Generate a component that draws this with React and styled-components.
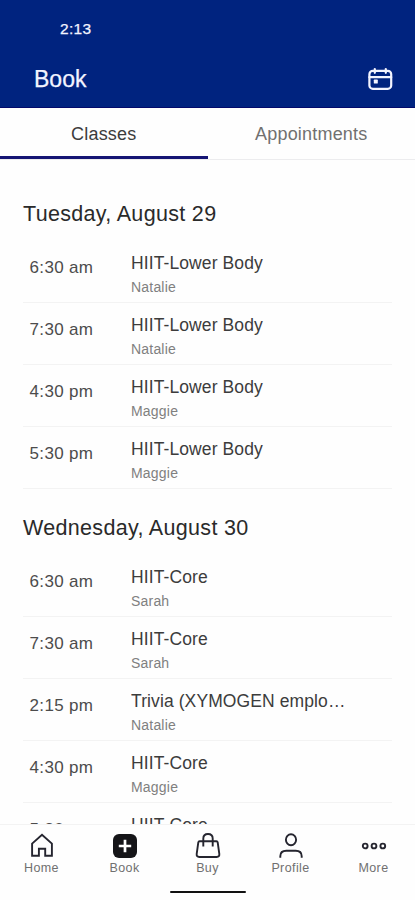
import React from 'react'
import styled, { createGlobalStyle } from 'styled-components'

const GlobalStyle = createGlobalStyle`
    * {
        box-sizing: border-box;
    }

    body {
        margin: 0;
        background: #fefefe;
        font-family: "Liberation Sans", Arial, sans-serif;
    }
`

const Screen = styled.div`
    display: flex;
    flex-direction: column;
    width: 415px;
    height: 900px;
    overflow: hidden;
    background: #fefefe;
`

const Header = styled.header`
    flex: none;
    height: 108px;
    background: #00237f;
    border-bottom: 1px solid #03096b;
    color: #f3f4ff;
`

const StatusBar = styled.div`
    height: 56px;
    padding: 19px 0 0 60px;
    font-size: 15.5px;
    line-height: 19px;
    letter-spacing: .3px;
    -webkit-text-stroke: .25px currentColor;
`

const TitleBar = styled.div`
    display: flex;
    align-items: center;
    justify-content: space-between;
    height: 46px;
    padding: 0 22px 0 34px;

    h1 {
        margin: 0;
        font-size: 23px;
        font-weight: 400;
        line-height: 28px;
        -webkit-text-stroke: .25px currentColor;
    }

    svg {
        display: block;
    }
`

const Tabs = styled.div`
    flex: none;
    display: flex;
    height: 52px;
    border-bottom: 1px solid #ececee;
`

const Tab = styled.div`
    width: 50%;
    height: 51px;
    padding-top: 15px;
    text-align: center;
    font-size: 18px;
    line-height: 22px;
    letter-spacing: .2px;
    color: ${props => props.$active ? '#3c3c3c' : '#707070'};
    border-bottom: 3px solid ${props => props.$active ? '#151574' : 'transparent'};
`

const Schedule = styled.main`
    flex: 1;
    min-height: 0;
    overflow: hidden;
    padding: 29px 23px 0;
`

const Day = styled.section`
    height: 314.4px;

    h2 {
        height: 52px;
        margin: 0;
        padding-top: 12px;
        font-size: 21.5px;
        font-weight: 400;
        line-height: 27px;
        letter-spacing: .32px;
        color: #2a2a2a;
    }
`

const ClassRow = styled.div`
    display: flex;
    height: 62px;
    padding-left: 6.5px;
    border-bottom: 1px solid #f3f3f3;
`

const Time = styled.div`
    width: 101.5px;
    padding-top: 16px;
    font-size: 17px;
    line-height: 22px;
    letter-spacing: .35px;
    color: #4c4c4c;
`

const ClassName = styled.div`
    width: 217px;
    padding-top: 11px;
    overflow: hidden;
    white-space: nowrap;
    text-overflow: ellipsis;
    font-size: 17.5px;
    line-height: 22px;
    letter-spacing: .1px;
    color: #3c3c3c;
`

const Teacher = styled.div`
    padding-top: 5px;
    font-size: 14px;
    line-height: 16px;
    letter-spacing: .2px;
    color: #808080;
`

const BottomNav = styled.nav`
    flex: none;
    display: flex;
    height: 66px;
    border-top: 1px solid #f3f3f3;
    background: #fefefe;
`

const NavItem = styled.div`
    flex: 1;
    display: flex;
    flex-direction: column;
    align-items: center;
    padding-top: 8px;
    font-size: 12.5px;
    line-height: 16px;
    letter-spacing: .4px;
    color: #707070;

    svg {
        display: block;
        margin-bottom: 1px;
    }
`

const HomeIndicator = styled.div`
    flex: none;
    width: 76px;
    height: 2px;
    margin: 1px auto 7px;
    border-radius: 1px;
    background: #111;
`

const CalendarIcon = () => (
    <svg width="26" height="26" viewBox="0 0 26 26" fill="none" stroke="#f3f4ff" strokeWidth="2.2" strokeLinecap="round">
        <rect x="2.4" y="4.8" width="21.8" height="18" rx="3.4" />
        <path d="M2.400 11.200h21.800M7.800 3v3.800M18.800 3v3.800" />
        <rect x="6.800" y="13.600" width="4" height="4" rx=".6" fill="#f3f4ff" stroke="none" />
    </svg>
)

const icons = {
    Home: <path d="M3.1 10.6 13 1.700l9.900 8.900v12.100h-6.700v-7H9.900v7H3.100z" />,
    Book: (
        <>
            <rect x="1" y="1" width="24" height="24" rx="6" fill="#151518" stroke="none" />
            <path d="M13 6.800v12.400M6.800 13h12.400" stroke="#fff" strokeWidth="2.700" />
        </>
    ),
    Buy: (
        <>
            <path d="M4.600 8.300h16.800q1.100 0 1.300 1.100l1.600 11.400q.4 3.200-2.600 3.200H4.300q-3 0-2.600-3.200L3.300 9.400q.2-1.100 1.300-1.100z" />
            <path d="M8.300 13.400V5.600Q8.300 1 13 1t4.700 4.600v7.800" />
        </>
    ),
    Profile: (
        <>
            <ellipse cx="13" cy="6.700" rx="5.100" ry="5.500" />
            <path d="M2.300 24.800v-1.500q0-5.500 6-5.500h9.400q6 0 6 5.500v1.500" />
        </>
    ),
    More: (
        <>
            <circle cx="4.200" cy="13" r="2.400" />
            <circle cx="13" cy="13" r="2.400" />
            <circle cx="21.800" cy="13" r="2.400" />
        </>
    ),
}

const days = [
    {
        date: 'Tuesday, August 29',
        classes: [
            ['6:30 am', 'HIIT-Lower Body', 'Natalie'],
            ['7:30 am', 'HIIT-Lower Body', 'Natalie'],
            ['4:30 pm', 'HIIT-Lower Body', 'Maggie'],
            ['5:30 pm', 'HIIT-Lower Body', 'Maggie'],
        ],
    },
    {
        date: 'Wednesday, August 30',
        classes: [
            ['6:30 am', 'HIIT-Core', 'Sarah'],
            ['7:30 am', 'HIIT-Core', 'Sarah'],
            ['2:15 pm', 'Trivia (XYMOGEN emplo…', 'Natalie'],
            ['4:30 pm', 'HIIT-Core', 'Maggie'],
            ['5:30 pm', 'HIIT-Core', 'Maggie'],
        ],
    },
]

const App = () => {
    return (
        <Screen>
            <GlobalStyle />
            <Header>
                <StatusBar>2:13</StatusBar>
                <TitleBar>
                    <h1>Book</h1>
                    <CalendarIcon />
                </TitleBar>
            </Header>
            <Tabs>
                <Tab $active>Classes</Tab>
                <Tab>Appointments</Tab>
            </Tabs>
            <Schedule>
                {days.map(day => (
                    <Day key={day.date}>
                        <h2>{day.date}</h2>
                        {day.classes.map(([time, name, teacher]) => (
                            <ClassRow key={time}>
                                <Time>{time}</Time>
                                <div>
                                    <ClassName>{name}</ClassName>
                                    <Teacher>{teacher}</Teacher>
                                </div>
                            </ClassRow>
                        ))}
                    </Day>
                ))}
            </Schedule>
            <BottomNav>
                {Object.keys(icons).map(name => (
                    <NavItem key={name}>
                        <svg width="26" height="26" viewBox="0 0 26 26" fill="none" stroke="#25252f" strokeWidth="1.9">
                            {icons[name]}
                        </svg>
                        {name}
                    </NavItem>
                ))}
            </BottomNav>
            <HomeIndicator />
        </Screen>
    )
}

export default App
